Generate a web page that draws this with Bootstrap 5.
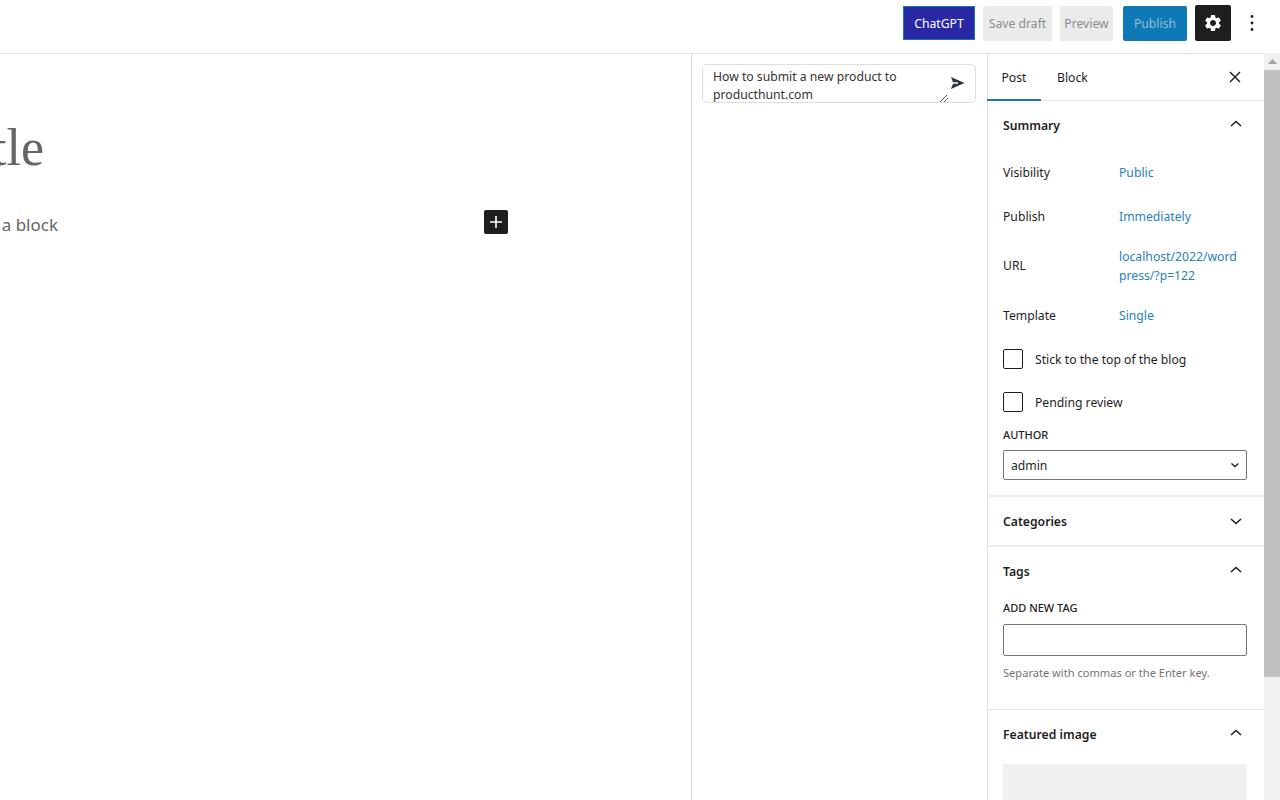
<!DOCTYPE html>
<html lang="en"><head><meta charset="utf-8"><title>Editor</title>
<link href="https://cdn.jsdelivr.net/npm/bootstrap@5.3.0/dist/css/bootstrap.min.css" rel="stylesheet">
<style>
html,body{height:800px;overflow:hidden}
body{font-family:"Noto Sans","Open Sans",sans-serif;font-size:12.2px;color:#1e1e1e;background:#fff}
.shell{width:1264px;height:800px}
.topbar{width:1280px;height:54px;border-bottom:1px solid #e0e0e0;padding:0 16px 7px 0}
.act{height:35px;font-size:12.2px;line-height:20px;padding:2px 0 0;border:0;border-radius:2px;font-family:inherit}
.act-gpt{width:72px;height:34px;background:#2828a5;color:#fff;border:1px solid #1e73b8;border-radius:0}
.act-off{background:#ebebeb;color:#8c8c8c;margin-left:8px}
.act-save{width:69px}
.act-prev{width:53px}
.act-pub{width:64px;margin-left:10px;background:#0f79b5;color:#8fbfdc}
.act-gear{width:36px;height:36px;margin-left:8px;padding:0;background:#1e1e1e}
.kebab{width:24px;height:36px;margin-left:9px;padding:0;border:0;background:none}
.workarea{height:746px}
.canvas{width:692px;border-right:1px solid #ddd;overflow:hidden}
.title-clip{height:60px;margin-top:64px;padding-right:647px;font-family:"Liberation Serif",serif;font-size:52px;font-weight:400;line-height:60px;color:#666;white-space:nowrap}
.para-row{margin-top:32px;height:24px}
.para-clip{width:58px;font-size:17px;line-height:24px;color:#666;white-space:nowrap;margin-top:3px}
.add-block{width:24px;height:24px;margin-left:426px;background:#1e1e1e;border:0;border-radius:2px;padding:0}
.chat{width:296px;border-right:1px solid #e2e2e2;padding:10px}
.chat-box{width:274px;height:39px;border:1px solid #ddd;border-radius:5px;padding:3px 10px 0;line-height:18px;color:#333;overflow:hidden}
.chat-text{width:205px}
.send-ico{margin-top:8px}
.grip{right:27px;bottom:0}
.side{width:277px;margin-left:-1px;overflow:hidden}
.tabs{height:47px;border-bottom:1px solid #e0e0e0}
.tab-item{height:47px;line-height:48px;padding:0 16px;color:#1e1e1e}
.tab-on{border-bottom:2px solid #1c75b0;width:54px;padding:0;text-align:center}
.x-btn{width:24px;height:24px;margin-right:17px;margin-top:11px;padding:0;border:0;background:none}
.sect{border-bottom:1px solid #e5e5e5;padding:0 16px}
.sect-summary{height:396px;border-bottom:2px solid #eee}
.sect-cats{height:50px;border-bottom:2px solid #eee}
.sect-cats .sect-head{height:48px}
.sect-tags{height:163px}
.sect-last{border-bottom:0}
.sect-head{height:49px;font-weight:600;color:#1e1e1e}
.nudge{padding-top:2px}
.sum-row{display:flex;align-items:center;min-height:36px;margin-bottom:8px}
.sum-first{margin-top:4px}
.sum-tall{min-height:47px}
.sum-label{width:116px;flex:none}
.sum-val{color:#2681b9;line-height:18.5px;width:124px;word-break:break-all}
.check-row{display:flex;align-items:center;margin-bottom:7px;height:36px}
.box{width:20px;height:20px;border:1px solid #1e1e1e;border-radius:2px;margin-right:12px;flex:none}
.cap{font-size:11px;font-weight:500;text-transform:uppercase;line-height:14px;color:#1e1e1e}
.cap-author{margin-top:8px;margin-bottom:8px}
.cap-tag{margin-top:5px;margin-bottom:9px}
.field{width:244px;height:30px;border:1px solid #757575;border-radius:2px;padding:0 7px;line-height:28px}
.field-tall{height:32px}
.field-ico{margin-right:-3px}
.hint{font-size:11.1px;line-height:16px;color:#757575;margin-top:9px}
.img-slot{width:244px;height:100px;margin-top:5px;background:#f0f0f0;border-radius:2px}
.scroll{width:16px;height:800px;background:#f1f1f1}
.scroll-up{height:17px;background:#f1f1f1}
.scroll-blank{height:53px;background:#fff}
.thumb{height:607px;background:#c1c1c1}
</style></head>
<body>
<div class="d-flex">
<div class="shell d-flex flex-column flex-shrink-0">
  <div class="topbar d-flex align-items-center justify-content-end">
    <button class="act act-gpt" type="button">ChatGPT</button>
    <button class="act act-off act-save" type="button">Save draft</button>
    <button class="act act-off act-prev" type="button">Preview</button>
    <button class="act act-pub" type="button">Publish</button>
    <button class="act act-gear d-flex align-items-center justify-content-center" type="button" aria-label="Settings">
      <svg width="20" height="20" viewBox="0 0 24 24" fill="#fff"><path d="M19.14 12.94c.04-.3.06-.61.06-.94 0-.32-.02-.64-.07-.94l2.03-1.58c.18-.14.23-.41.12-.61l-1.92-3.32c-.12-.22-.37-.29-.59-.22l-2.39.96c-.5-.38-1.03-.7-1.62-.94l-.36-2.54c-.04-.24-.24-.41-.48-.41h-3.84c-.24 0-.43.17-.47.41l-.36 2.54c-.59.24-1.13.57-1.62.94l-2.39-.96c-.22-.08-.47 0-.59.22L2.74 8.87c-.12.21-.08.47.12.61l2.03 1.58c-.05.3-.09.63-.09.94s.02.64.07.94l-2.03 1.58c-.18.14-.23.41-.12.61l1.92 3.32c.12.22.37.29.59.22l2.39-.96c.5.38 1.03.7 1.62.94l.36 2.54c.05.24.24.41.48.41h3.84c.24 0 .44-.17.47-.41l.36-2.54c.59-.24 1.13-.56 1.62-.94l2.39.96c.22.08.47 0 .59-.22l1.92-3.32c.12-.22.07-.47-.12-.61l-2.01-1.58zM12 15.6c-1.98 0-3.6-1.62-3.6-3.6s1.62-3.6 3.6-3.6 3.6 1.62 3.6 3.6-1.62 3.6-3.6 3.6z"/></svg>
    </button>
    <button class="kebab d-flex align-items-center justify-content-center" type="button" aria-label="Options">
      <svg width="24" height="24" viewBox="0 0 24 24" fill="#1e1e1e"><circle cx="12" cy="5.5" r="1.4"/><circle cx="12" cy="12" r="1.4"/><circle cx="12" cy="18.5" r="1.4"/></svg>
    </button>
  </div>
  <div class="workarea d-flex">
    <div class="canvas flex-shrink-0">
      <div class="title-clip d-flex justify-content-end"><span>Add title</span></div>
      <div class="para-row d-flex">
        <div class="para-clip d-flex justify-content-end"><span>Type / to choose a block</span></div>
        <button class="add-block d-flex align-items-center justify-content-center" type="button" aria-label="Add block">
          <svg width="24" height="24" viewBox="0 0 24 24" fill="#fff"><path d="M11.2 6h1.6v5.2H18v1.6h-5.2V18h-1.6v-5.2H6v-1.6h5.2z"/></svg>
        </button>
      </div>
    </div>
    <div class="chat flex-shrink-0">
      <div class="chat-box d-flex justify-content-between position-relative">
        <div class="chat-text">How to submit a new product to producthunt.com</div>
        <svg class="send-ico flex-shrink-0" width="15" height="14" viewBox="0 0 16 14" fill="#2b3640"><path d="M1 0.5L15.5 7 1 13.5 3.2 7.7h5.3V6.3H3.2z"/></svg>
        <svg class="grip position-absolute" width="9" height="8" viewBox="0 0 9 8" stroke="#555" fill="none"><path d="M1 8L8 1M5 8L9 4"/></svg>
      </div>
    </div>
    <div class="side flex-shrink-0">
      <div class="tabs d-flex">
        <div class="tab-item tab-on">Post</div>
        <div class="tab-item">Block</div>
        <button class="x-btn ms-auto" type="button" aria-label="Close">
          <svg width="24" height="24" viewBox="0 0 24 24" fill="#1e1e1e"><path d="M13 12l4.5-4.5-1-1L12 11 7.5 6.5l-1 1L11 12l-4.5 4.5 1 1L12 13l4.5 4.5 1-1z"/></svg>
        </button>
      </div>
      <div class="sect sect-summary">
        <div class="sect-head d-flex align-items-center justify-content-between"><span class="nudge">Summary</span>
          <svg width="24" height="24" viewBox="0 0 24 24" fill="#1e1e1e"><path d="M6.5 11.4L12 6.4l5.5 5-1 1.1L12 8.5l-4.5 4z"/></svg>
        </div>
        <div class="sum-row sum-first"><div class="sum-label nudge">Visibility</div><div class="sum-val nudge">Public</div></div>
        <div class="sum-row"><div class="sum-label nudge">Publish</div><div class="sum-val nudge">Immediately</div></div>
        <div class="sum-row sum-tall"><div class="sum-label nudge">URL</div><div class="sum-val nudge">localhost/2022/wordpress/?p=122</div></div>
        <div class="sum-row"><div class="sum-label nudge">Template</div><div class="sum-val nudge">Single</div></div>
        <div class="check-row"><span class="box"></span><span class="nudge">Stick to the top of the blog</span></div>
        <div class="check-row"><span class="box"></span><span class="nudge">Pending review</span></div>
        <div class="cap cap-author">Author</div>
        <div class="field d-flex align-items-center justify-content-between"><span class="nudge">admin</span>
          <svg class="field-ico" width="14" height="14" viewBox="0 0 14 14" fill="none" stroke="#1e1e1e" stroke-width="1.4"><path d="M3.5 5.5L7 8.5l3.5-3"/></svg>
        </div>
      </div>
      <div class="sect sect-cats"><div class="sect-head d-flex align-items-center justify-content-between"><span class="nudge">Categories</span>
        <svg width="24" height="24" viewBox="0 0 24 24" fill="#1e1e1e"><path d="M17.5 10.6L12 15.6l-5.5-5 1-1.1 4.5 4 4.5-4z"/></svg></div></div>
      <div class="sect sect-tags">
        <div class="sect-head d-flex align-items-center justify-content-between"><span class="nudge">Tags</span>
          <svg width="24" height="24" viewBox="0 0 24 24" fill="#1e1e1e"><path d="M6.5 11.4L12 6.4l5.5 5-1 1.1L12 8.5l-4.5 4z"/></svg>
        </div>
        <div class="cap cap-tag">Add new tag</div>
        <div class="field field-tall"></div>
        <div class="hint">Separate with commas or the Enter key.</div>
      </div>
      <div class="sect sect-last">
        <div class="sect-head d-flex align-items-center justify-content-between"><span class="nudge">Featured image</span>
          <svg width="24" height="24" viewBox="0 0 24 24" fill="#1e1e1e"><path d="M6.5 11.4L12 6.4l5.5 5-1 1.1L12 8.5l-4.5 4z"/></svg>
        </div>
        <div class="img-slot"></div>
      </div>
    </div>
  </div>
</div>
<div class="scroll flex-shrink-0">
  <div class="scroll-blank"></div>
  <div class="scroll-up d-flex align-items-center justify-content-center"><svg width="9" height="5" viewBox="0 0 9 5" fill="#a3a3a3"><path d="M4.5 0L9 5H0z"/></svg></div>
  <div class="thumb"></div>
</div>
</div>
<script src="https://cdn.jsdelivr.net/npm/bootstrap@5.3.0/dist/js/bootstrap.bundle.min.js"></script>
</body></html>
